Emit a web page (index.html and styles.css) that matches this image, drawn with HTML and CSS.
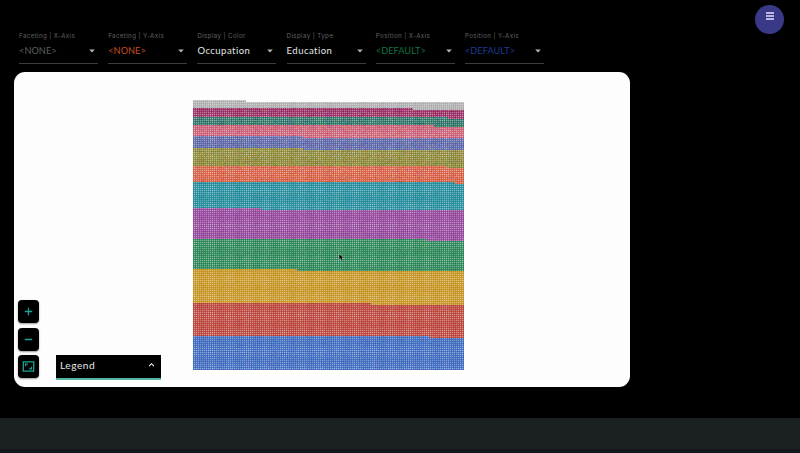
FILE: index.html
```html
<!DOCTYPE html>
<html lang="en">
<head>
<meta charset="utf-8">
<title>Facets Dive</title>
<link rel="stylesheet" href="styles.css">
</head>
<body>
<div class="app">
  <header class="controls">
    <div class="field"><label>Faceting | X-Axis</label><div class="value muted">&lt;NONE&gt;<svg class="caret" width="6" height="4" viewBox="0 0 6 4"><path d="M.2.5h5.6L3 3.5z"/></svg></div></div>
    <div class="field"><label>Faceting | Y-Axis</label><div class="value orange">&lt;NONE&gt;<svg class="caret" width="6" height="4" viewBox="0 0 6 4"><path d="M.2.5h5.6L3 3.5z"/></svg></div></div>
    <div class="field"><label>Display | Color</label><div class="value">Occupation<svg class="caret" width="6" height="4" viewBox="0 0 6 4"><path d="M.2.5h5.6L3 3.5z"/></svg></div></div>
    <div class="field"><label>Display | Type</label><div class="value">Education<svg class="caret" width="6" height="4" viewBox="0 0 6 4"><path d="M.2.5h5.6L3 3.5z"/></svg></div></div>
    <div class="field"><label>Position | X-Axis</label><div class="value green">&lt;DEFAULT&gt;<svg class="caret" width="6" height="4" viewBox="0 0 6 4"><path d="M.2.5h5.6L3 3.5z"/></svg></div></div>
    <div class="field"><label>Position | Y-Axis</label><div class="value blue">&lt;DEFAULT&gt;<svg class="caret" width="6" height="4" viewBox="0 0 6 4"><path d="M.2.5h5.6L3 3.5z"/></svg></div></div>
  </header>
  <button class="menu" aria-label="Menu"><svg width="10" height="10" viewBox="0 0 10 10"><path d="M1 1.9h8M1 4.9h8M1 7.9h8" stroke="#e4e2ff" stroke-width="1.5"/></svg></button>
  <main class="stage">
    <canvas id="plot" class="plot" width="271" height="272"></canvas>
    <svg class="pointer" width="7" height="9" viewBox="0 0 7 9"><path d="M1 .8v5.9l1.4-1.1 1 2.3 1.5-.6-1-2.2h1.9z" fill="#050505" stroke="#d5e8dd" stroke-width=".4"/></svg>
    <div class="tools">
      <button aria-label="Zoom in"><svg width="13" height="13" viewBox="0 0 13 13"><path d="M6.5 2.8v7.4M2.8 6.5h7.4" /></svg></button>
      <button aria-label="Zoom out"><svg width="13" height="13" viewBox="0 0 13 13"><path d="M2.8 6.5h7.4"/></svg></button>
      <button aria-label="Fit"><svg width="13" height="13" viewBox="0 0 13 13"><path d="M1.3 1.9h10.4v9.2H1.3zM3.6 6.2V4.2H5.8M9.4 6.8v2H7.2"/></svg></button>
    </div>
    <div class="legend">Legend<svg width="7" height="5" viewBox="0 0 7 5"><path d="M1.1 3.1 3.5.7l2.4 2.4" fill="none" stroke="#eee" stroke-width="1.1"/></svg></div>
  </main>
</div>
<footer class="footer"></footer>
<script src="plot.js"></script>
</body>
</html>
```
FILE: styles.css
```css
* { box-sizing: border-box; }
body {
  margin: 0;
  height: 453px;
  overflow: hidden;
  background: #12171a;
  color: #e4e8e6;
  font-family: Lato, "Liberation Sans", sans-serif;
}
.app {
  position: relative;
  height: 418px;
  padding: 30px 14px 0;
  background: #000;
}
.controls {
  display: flex;
  gap: 10.2px;
  height: 42px;
  padding-left: 5px;
}
.field {
  width: 79px;
  height: 34px;
  border-bottom: 1px solid #3c3c3c;
}
.field label {
  display: block;
  height: 10px;
  color: #606262;
  font-family: Inter, sans-serif;
  font-size: 6.2px;
  line-height: 11px;
  letter-spacing: .38px;
  white-space: nowrap;
}
.value {
  display: flex;
  align-items: center;
  justify-content: space-between;
  height: 21px;
  padding-right: 3px;
  font-size: 9.5px;
  letter-spacing: .48px;
}
.muted { color: #5a5f5d; }
.orange { color: #c64e21; }
.green { color: #137443; }
.blue { color: #1e3c93; }
.muted, .orange, .green, .blue { font-size: 9.2px; letter-spacing: .05px; }
.caret { fill: #aebcb7; }
.menu {
  position: absolute;
  top: 5px;
  right: 16px;
  width: 29px;
  height: 29px;
  padding: 6px 0 0;
  border: 0;
  border-radius: 50%;
  background: #3a3988;
  display: flex;
  justify-content: center;
  align-items: flex-start;
}
.stage {
  position: relative;
  width: 616px;
  height: 315px;
  border-radius: 11px;
  background: #fdfdfd;
  overflow: hidden;
}
.plot { display: block; margin-left: 179px; padding-top: 27px; box-sizing: content-box; }
.pointer { position: absolute; left: 324px; top: 181px; }
.tools {
  position: absolute;
  left: 4px;
  bottom: 9px;
  display: flex;
  flex-direction: column;
  gap: 4.5px;
}
.tools button {
  display: flex;
  align-items: center;
  justify-content: center;
  width: 21px;
  height: 23px;
  padding: 0;
  border: 0;
  border-radius: 4px;
  background: #000;
  box-shadow: 0 1px 2px #0006;
}
.tools path { fill: none; stroke: #18a596; stroke-width: 1.3; }
.legend {
  position: absolute;
  left: 42px;
  bottom: 7px;
  display: flex;
  align-items: center;
  justify-content: space-between;
  width: 105px;
  height: 25px;
  padding: 0 6px 3px 4px;
  border-bottom: 2px solid #54b5a3;
  background: #000;
  font-size: 10.2px;
  letter-spacing: .5px;
}
.footer { height: 31px; background: #1b2023; }
```
FILE: plot.js
```js
const ctx = document.getElementById("plot").getContext("2d");
const W = 271, H = 272;
// Each band: top on the left, column where it steps down, top after the step, colour.
const bands = [
  [1, 53, 3, [165, 165, 167]],
  [9, 220, 11, [140, 20, 80]],
  [18, 255, 20, [18, 98, 84]],
  [26, 241, 28, [195, 75, 100]],
  [37, 110, 39, [73, 84, 157]],
  [49, 110, 51, [125, 120, 30]],
  [67, 254, 69, [208, 75, 45]],
  [83, 262, 85, [8, 125, 143]],
  [109, 68, 111, [134, 48, 143]],
  [140, 234, 142, [16, 119, 66]],
  [170, 104, 172, [190, 135, 8]],
  [204, 178, 206, [178, 46, 36]],
  [237, 237, 239, [38, 88, 182]]
];
let seed = 17;
const rand = () => (seed = (seed * 1103515245 + 12345) % 2147483648) / 2147483648;
// Gaps fall on every second pixel and are widest once in each 18.
const gap = p => (p % 2 ? .82 + .16 * Math.cos(p * Math.PI / 9) : .14);
const img = ctx.createImageData(W, H);
for (let y = 0; y < 271; y++) {
  for (let x = 0; x < W; x++) {
    let band = -1;
    bands.forEach((b, i) => { if (y >= (x < b[1] ? b[0] : b[2])) band = i; });
    if (band < 0) continue;
    const gx = gap(x), gy = gap(y);
    const light = .02 + .11 * gx + .11 * gy + .32 * gx * gy + rand() * .07;
    const k = (y * W + x) * 4;
    const noise = band > 0 && band < 7 ? 34 : 14;
    bands[band][3].forEach((c, i) => {
      img.data[k + i] = c + (255 - c) * light + (rand() - .5) * noise;
    });
    img.data[k + 3] = 255;
  }
}
ctx.putImageData(img, 0, 0);
```
